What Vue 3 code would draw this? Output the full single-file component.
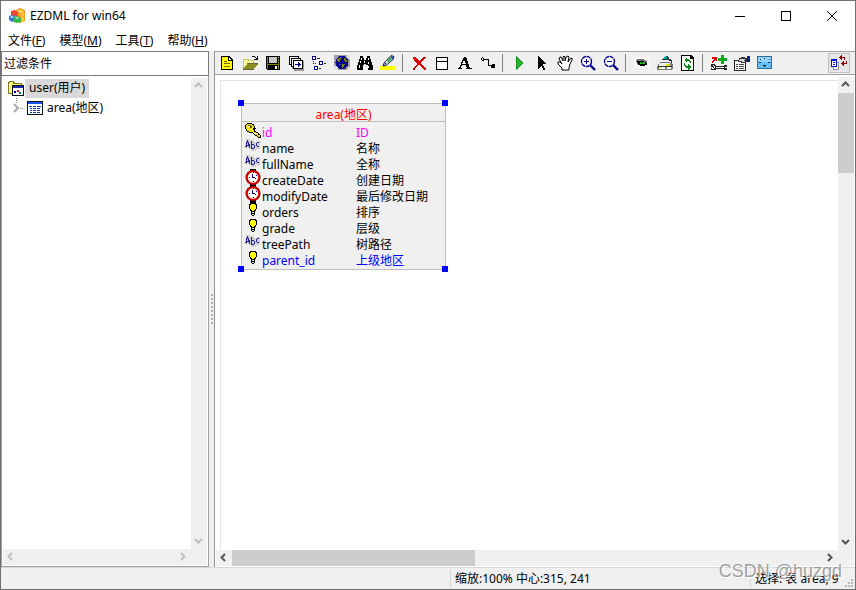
<script setup>
import { ref } from 'vue'

const filter = ref('过滤条件')
const menus = [
  { text: '文件', key: 'F' },
  { text: '模型', key: 'M' },
  { text: '工具', key: 'T' },
  { text: '帮助', key: 'H' }
]

const lens = '<g shape-rendering="auto"><circle cx="6.5" cy="6.5" r="5" fill="#fff" stroke="#00008b" stroke-width="1.4" stroke-dasharray="4 .6"/><path d="M10 10l5 5" stroke="#00008b" stroke-width="2.4"/></g>'

const groups = [
  [
    { label: '新建', art: '<path d="M2 1h8l4 4v10H2z" fill="#000"/><path d="M3 2h6v4h4v8H3z" fill="#ff0"/><path d="M10 3l2 2h-2z" fill="#fff"/><path d="M5 6h3v1H5zM5 8h6v1H5zM5 11h6v1H5z" fill="#860"/>' },
    { label: '打开', art: '<path d="M1 4h5l1 1h5v4h-1V6H6L5 5H2v8H1z" fill="#c8c860"/><path d="M2 5h3l1 1h5v3H5l-3 4z" fill="#ffffa0"/><path d="M5 9h11l-4 5H1z" fill="#8c8c20"/><path d="M1 14h11v1H1zM5 8h11v1H5z" fill="#6a6a30"/><path d="M9 2h1V1h3v1h1v1h1V1h1v4h-4V4h2V3h-1V2z" fill="#000"/>' },
    { label: '保存', art: '<path d="M1 1h14v14H2l-1-1z" fill="#000"/><path d="M2 2h1v12H2zM13 4h1v10h-1zM3 9h10v1H3z" fill="#808000"/><path d="M4 2h8v6H4z" fill="#c8c8c8"/><path d="M13 2h1v1h-1zM10 11h2v3h-2z" fill="#eee"/>' },
    { label: '复制模型', art: '<path d="M4 12h2v2h8V6h2v10H6v-2H4z" fill="#999"/><path d="M1 1h10v9H1z" fill="#000"/><path d="M2 2h8v7H2z" fill="#fff"/><path d="M3 3h10v9H3z" fill="#000"/><path d="M4 4h8v7H4z" fill="#fff"/><path d="M5 5h10v9H5z" fill="#000"/><path d="M6 6h8v7H6z" fill="#fff"/><path d="M7 9h3V7h1v1h1v1h1v1h-1v1h-1v1h-1v-2H7z" fill="#00008b"/>' },
    { label: '结构', art: '<path d="M1 1h4v4H1zM8 6h4v4H8zM3 11h4v4H3z" fill="#00008b"/><path d="M2 2h2v2H2zM9 7h2v2H9zM4 12h2v2H4z" fill="#fff"/><path d="M6 3h3v1H6zM13 8h2v1h-2zM8 13h2v1H8zM2 6h1v1H2zM2 8h1v1H2zM4 8h1v1H4z" fill="#222"/>' },
    { label: '浏览', art: '<path d="M0 0h16v15H0z" fill="#a0a0a0"/><path d="M0 11h3v1h1v3H0zM13 0h3v4h-2V3h-1zM14 12h2v3h-3v-1h1z" fill="#e4e4e4"/><circle cx="8" cy="7.500" r="6.500" fill="#00008b"/><path d="M4 3h3v2H6v2H4L3 6zM10 3h2l1 3-1 2-2-2zM8 9h3l-2 4H8z" fill="#808000"/><path d="M6 2h2v1H6zM5 9h2v1H5z" fill="#2040ff"/>' },
    { label: '查找', art: '<path d="M3 1h3v2h1v2h2V3h1V1h3v3h1v3h1v3h1v5h-5v-5H9v-1H7v1H6v5H0v-5h1V7h1V4h1z" fill="#000"/><path d="M4 3h1v2H4zM3 6h1v2H3zM2 10h1v3H2zM11 3h1v2h-1zM11 7h1v2h-1zM11 11h1v2h-1zM7 6h1v2H7z" fill="#fff"/>' },
    { label: '高亮', art: '<path d="M0 11h16v4H0z" fill="#ff0"/><g shape-rendering="auto"><path d="M4 8L11 .5l3 1-1 3-7 6-3 .5z" fill="#fff" stroke="#222"/><path d="M7 6l3-4 2 2-4 4z" fill="#3fa66c"/><path d="M11 1l3 1-1 3-2-2zM5 7l2 2-3 1z" fill="#2949a8"/></g>' }
  ],
  [
    { label: '删除', art: '<path d="M2 2h3v1h1v1h1v1h1v1h1V5h1V4h1V3h1V2h3v1h-1v1h-1v1h-1v1h-1v1h-1v2h1v1h1v1h1v1h1v1h1v2h-2v-1h-1v-1h-1v-1h-1v-1H9v-1H7v1H6v1H5v1H4v2H2v-2h1v-1h1v-1h1v-1h1V8H5V7H4V6H3V4H2z" fill="#d80000"/>' },
    { label: '新建表', art: '<path d="M2 2h12v13H2z" fill="#000"/><path d="M3 3h10v3H3zM3 7h10v7H3z" fill="#fff"/>' },
    { label: '文字', art: '<path d="M7 2h2l4 11h2v1H9v-1h1l-1-3H5l-1 3h1v1H1v-1h1zM7 5L5 9h4z" fill="#000" fill-rule="evenodd"/>' },
    { label: '连线', art: '<path d="M2 2h1v1h1v1h5v6h4v-1h2v4h-4v-2H8V5H4v1H2V5H1V3h1z" fill="#000"/><path d="M2 3h1v2H2z" fill="#fff"/><path d="M12 9h3v4h-4v-2h1z" fill="#000"/>' }
  ],
  [
    { label: '运行', art: '<g shape-rendering="auto"><path d="M5.500 1.500L12 8l-6.500 6.500z" fill="#22b52d" stroke="#15951d"/></g>' },
    { label: '选择', art: '<path d="M4 1h1v1h1v1h1v1h1v1h1v1h1v1h1v1h1v1H9v2h1v2h1v2H9v-2H8v-2H7v1H6v1H5v1H4z" fill="#000"/>' },
    { label: '移动', art: '<g shape-rendering="auto"><path d="M5 15v-2L1 9V7h2l2 2-3-5 1-2h1l2 4V2l1-1 1 1v4l1-4 2-1 1 1-1 5 2-3 2-1v2l-2 4-1 4v2z" fill="#fff" stroke="#000"/></g>' },
    { label: '放大', art: lens + '<path d="M4 6h5v1H4zM6 4h1v5H6z" fill="#00008b"/>' },
    { label: '缩小', art: lens + '<path d="M4 6h5v1H4z" fill="#00008b"/>' }
  ],
  [
    { label: '预览', art: '<path d="M0 3h16v10H0z" fill="#f7f7f7"/><path d="M3 4h7v1h2v1h1v4h-2v1H7v-1H4V9H3V7H2V5h1z" fill="#777"/><path d="M3 6h7v1h2v1h1v2h-2v1H6v-1H4V8H3z" fill="#000"/><path d="M6 7h5v2H6z" fill="#28b828"/><path d="M7 7h2v1H7z" fill="#063"/>' },
    { label: '扫描', art: '<path d="M8 1h3v1h1v2h2v1h1v3h-1V6h-2V5H5V4h2V2h1z" fill="#333"/><path d="M8 1h2v3H6z" fill="#0aa"/><path d="M3 7h10v1h2v1h1v5h-1v1H0v-4h1V9h2z" fill="#777"/><path d="M4 8h9l-1 3H2V9z" fill="#eee"/><path d="M2 12h6v2H2zM10 12h4v2h-4z" fill="#fff"/><path d="M9 9h4v2H9zM2 12h3v1H2z" fill="#ed0"/><path d="M1 11h14v1H1z" fill="#333"/>' },
    { label: '刷新', art: '<path d="M1 0h10l3 3v13H1z" fill="#000"/><path d="M2 1h8v3h3v11H2z" fill="#fff"/><path d="M7 2v2h2v1h1v1h1v2h-1V7H9V6H7v2L4 5zM4 8h1v2h1v1h2V9l3 3-3 3v-2H6v-1H5v-1H4z" fill="#078a18"/>' }
  ],
  [
    { label: '添加工具', art: '<path d="M1 2h5v4H5V5H4v1H3v1H2v1H1V6h1V5h1V4H1z" fill="#e00000"/><path d="M10 0h3v3h3v3h-3v3h-3V6H7V3h3z" fill="#08a818"/><path d="M0 9h4v1h1v1h8v-1h3v2h-2v1h2v2h-3v-1H5v1H0v-2h2v-1H0z" fill="#222"/><path d="M2 10h1v1h1v2H3v1H1v-1h2v-2H2zM5 12h8v1H5z" fill="#fff"/>' },
    { label: '属性', art: '<path d="M0 5h5v1h7v10H0z" fill="#222"/><path d="M1 6h10v9H1z" fill="#fff"/><path d="M2 9h2v1H2zM5 9h5v1H5zM2 11h2v1H2zM5 11h5v1H5zM2 13h2v1H2zM5 13h5v1H5z" fill="#444"/><path d="M3 5h2V3h2V2h4v1h2v4h-2v1H7V7H4V6H3z" fill="#333"/><path d="M6 4h5v1H6zM5 5h5v1H5zM8 6h3v1H8z" fill="#ddd"/><path d="M13 1h3v6h-3z" fill="#001f7c"/>' },
    { label: '全屏', art: '<path d="M0 1h15v13H0z" fill="#31698e"/><path d="M1 2h13v11H1z" fill="#63befa"/><path d="M1 2h13v5H1z" fill="#8ed6ff"/><path d="M2 7h2v1H2zM11 7h2v1h-2zM7 3h1v1H7zM6 10h3v1H6zM7 11h1v1H7zM3 4h1v1H3zM12 4h1v1h-1z" fill="#123"/>' }
  ]
]

const fieldArt = {
  key: '<path d="M2 0h5v1h2v2h1v2h1v1h-1v2h1v1h2v1h1v1h1v1h1v3h-3v-1h-1v-1h-2v-1H9v-1H8v-1H4V9H2V8H1V6H0V2h1V1h1z" fill="#000"/><path d="M2 1h5v1h1v1h1v2H8v2h1v2h2v1h2v2h2v2h-2v-1h-1v-1h-2v-1H9v-1H8V9H4V8H2V6H1V2h1z" fill="#f5df18"/><path d="M3 2h3v1h1v2H5V4H3z" fill="#665c00"/><path d="M3 3h2v1H3zM6 6h1v1H6zM9 10h1v1H9z" fill="#fff"/>',
  abc: '<path d="M1 0h4v2h1V1h3v2h2V2h4v8h-4v2H6v-2H5V9H0V4h1z" fill="#cfcfd4"/><path d="M2 1h1v2h1v2h1v4H4V7H2v1H0V7h1V3h1zM2 4v2h1V4zM6 2h1v3h2v1h1v3H9v1H6zM7 6v3h2V6zM12 3h2v1h-2v3h2v1h-2V7h-1V4h1z" fill="#26268f" fill-rule="evenodd"/>',
  clock: '<path d="M5 0h6v3H5zM5 15h6v3H5z" fill="#000"/><g shape-rendering="auto"><circle cx="8" cy="8.500" r="7.500" fill="#400"/><circle cx="8" cy="8.500" r="6.200" fill="#fff" stroke="#e00000" stroke-width="2"/></g><path d="M7 5h1v3h2v1H7zM10 9h1v1h-1zM8 3h1v1H8zM4 8h1v1H4zM11 6h1v1h-1zM8 12h1v1H8z" fill="#00008b"/>',
  bulb: '<path d="M5 0h6v1h1v5h-1v2h-1v4H9v1H7v-1H6V8H5V6H4V1h1z" fill="#000"/><path d="M6 1h4v1h1v4h-1v1H9v1H7V7H6V6H5V2h1z" fill="#ff0"/><path d="M7 9h2v1H7zM7 11h2v1H7z" fill="#ddd"/><path d="M6 2h1v2H6z" fill="#fff"/>'
}

const fields = [
  { name: 'id', text: 'ID', icon: 'key', tone: 'primary' },
  { name: 'name', text: '名称', icon: 'abc' },
  { name: 'fullName', text: '全称', icon: 'abc' },
  { name: 'createDate', text: '创建日期', icon: 'clock' },
  { name: 'modifyDate', text: '最后修改日期', icon: 'clock' },
  { name: 'orders', text: '排序', icon: 'bulb' },
  { name: 'grade', text: '层级', icon: 'bulb' },
  { name: 'treePath', text: '树路径', icon: 'abc' },
  { name: 'parent_id', text: '上级地区', icon: 'bulb', tone: 'foreign' }
]
</script>

<template>
  <div class="window">
    <header class="titlebar">
      <svg class="logo" viewBox="0 0 16 16">
        <path d="M7 2l4-2 5 2v11l-5 2-4-2z" fill="#f0a020" />
        <path d="M8 3l3-1 4 1-4 2z" fill="#ffe080" />
        <path d="M12 5l3-1v9l-3 1z" fill="#ffc040" />
        <path d="M2 3l4-1 3 2v4l-4 1-3-2z" fill="#e84838" />
        <path d="M0 8l3-1 3 1v5l-3 1-3-2z" fill="#3978e0" />
        <path d="M5 9l3-1 4 2v4l-4 1-3-1z" fill="#35b848" />
        <path d="M1 9l2-1 2 1-2 1zM6 10l2-1 2 1-2 1z" fill="#bde8ff" />
      </svg>
      <h1>EZDML for win64</h1>
      <div class="caption">
        <button aria-label="最小化"><svg viewBox="0 0 12 12"><path d="M1 6.500h10" /></svg></button>
        <button aria-label="最大化"><svg viewBox="0 0 12 12"><path d="M1.500 1.500h9v9h-9z" /></svg></button>
        <button aria-label="关闭"><svg class="smooth" viewBox="0 0 12 12"><path d="M1 1l10 10M11 1L1 11" /></svg></button>
      </div>
    </header>

    <nav class="menu">
      <button v-for="m in menus" :key="m.key">{{ m.text }}(<u>{{ m.key }}</u>)</button>
    </nav>

    <main class="work">
      <aside class="side">
        <input v-model="filter" type="text" aria-label="过滤条件" />
        <div class="tree-panel">
          <ul class="tree">
            <li class="root">
              <svg class="icon" viewBox="0 0 16 16" shape-rendering="crispEdges">
                <path d="M0 2h1V1h5v1h1v1h7v4H5v7H0z" fill="#807a20" />
                <path d="M1 3h1V2h3v2h8v3H4v6H1z" fill="#fff27a" />
                <path d="M4 5h12v11H4z" fill="#111" />
                <path d="M5 6h10v2H5z" fill="#1630b0" />
                <path d="M5 8h10v7H5z" fill="#fff" />
                <path d="M6 11h2v2H6z" fill="#00008b" />
                <path d="M9 10h2v2H9z" fill="#d00" />
                <path d="M11 12h2v2h-2z" fill="#088" />
              </svg>
              <span class="node selected">user(用户)</span>
            </li>
            <li class="child">
              <svg class="branch" viewBox="0 0 16 20" shape-rendering="crispEdges">
                <path d="M8.500 0v6M12 10.500h4" stroke="#888" stroke-dasharray="1 1" />
                <path d="M6 6l4 4-4 4" fill="none" stroke="#a8a8a8" stroke-width="2" shape-rendering="auto" />
              </svg>
              <svg class="icon" viewBox="0 0 16 16" shape-rendering="crispEdges">
                <path d="M0 1h16v14H0z" fill="#111" />
                <path d="M1 2h14v2H1z" fill="#1757ff" />
                <path d="M1 4h14v10H1z" fill="#fff" />
                <path d="M2 6h3v1H2zM6 6h3v1H6zM10 6h4v1h-4zM3 8h2v1H3zM6 8h3v1H6zM10 8h3v1h-3zM3 10h2v1H3zM6 10h3v1H6zM10 10h3v1h-3zM3 12h2v1H3zM6 12h3v1H6zM10 12h3v1h-3z" fill="#1240a8" />
              </svg>
              <span class="node">area(地区)</span>
            </li>
          </ul>
          <div class="bar vertical faint">
            <svg viewBox="0 0 9 9"><path d="M1 6l3.500-3.500L8 6" /></svg>
            <svg viewBox="0 0 9 9"><path d="M1 3l3.500 3.500L8 3" /></svg>
          </div>
          <div class="bar horizontal faint">
            <svg viewBox="0 0 9 9"><path d="M6 1L2.500 4.500 6 8" /></svg>
            <svg viewBox="0 0 9 9"><path d="M3 1l3.500 3.500L3 8" /></svg>
          </div>
          <div class="corner"></div>
        </div>
      </aside>

      <div class="splitter"><i v-for="n in 8" :key="n"></i></div>

      <section class="editor">
        <div class="toolbar" role="toolbar">
          <div v-for="(g, i) in groups" :key="i" class="group">
            <button v-for="b in g" :key="b.label" :aria-label="b.label">
              <svg class="icon" viewBox="0 0 16 16" shape-rendering="crispEdges" v-html="b.art"></svg>
            </button>
          </div>
          <button class="toggle" aria-label="同步">
            <svg viewBox="0 0 18 16" shape-rendering="crispEdges">
              <path d="M3 7h6v8H3z" fill="#999" />
              <path d="M4 8h4v6H4z" fill="#fff" />
              <path d="M1 4h6v8H1z" fill="#0010e0" />
              <path d="M2 6h4v5H2z" fill="#fff" />
              <path d="M3 7h2v1H3zM3 9h2v1H3z" fill="#0010e0" />
              <path d="M12 0v2h3v3h-1V3h-2v2H11V4h-1V3H9V2h1V1h1V0zM17 6v3h-3v2h-1v-1h-1V9h-1V8h1V7h1V6h1v2h2V6z" fill="#900000" />
            </svg>
          </button>
        </div>

        <div class="canvas-area">
          <div class="canvas">
            <div class="paper">
              <div class="entity">
                <table>
                  <caption>area(地区)</caption>
                  <tbody>
                    <tr v-for="f in fields" :key="f.name" :class="f.tone">
                      <td class="mark">
                        <svg :class="f.icon" :viewBox="f.icon === 'clock' ? '0 0 16 18' : '0 0 16 16'" shape-rendering="crispEdges" v-html="fieldArt[f.icon]"></svg>
                      </td>
                      <td class="field">{{ f.name }}</td>
                      <td class="note">{{ f.text }}</td>
                    </tr>
                  </tbody>
                </table>
                <i class="handle tl"></i><i class="handle tr"></i><i class="handle bl"></i><i class="handle br"></i>
              </div>
            </div>
          </div>
          <div class="bar vertical">
            <svg viewBox="0 0 9 9"><path d="M1 6l3.500-3.500L8 6" /></svg>
            <span class="thumb"></span>
            <svg viewBox="0 0 9 9"><path d="M1 3l3.500 3.500L8 3" /></svg>
          </div>
          <div class="bar horizontal">
            <svg viewBox="0 0 9 9"><path d="M6 1L2.500 4.500 6 8" /></svg>
            <span class="thumb"></span>
            <svg viewBox="0 0 9 9"><path d="M3 1l3.500 3.500L3 8" /></svg>
          </div>
          <div class="corner"></div>
        </div>
      </section>
    </main>

    <footer class="status">
      <span></span>
      <span>缩放:100% 中心:315, 241</span>
      <span>选择: 表 area, 9</span>
      <svg class="grip" viewBox="0 0 9 9" shape-rendering="crispEdges">
        <path d="M6 0h2v2H6zM3 3h2v2H3zM6 3h2v2H6zM0 6h2v2H0zM3 6h2v2H3zM6 6h2v2H6z" fill="#b8b8b8" />
      </svg>
      <div class="watermark">CSDN @huzgd</div>
    </footer>
  </div>
</template>

<style>
body {
  margin: 0;
}
</style>

<style scoped>
.window {
  box-sizing: border-box;
  height: 100vh;
  display: flex;
  flex-direction: column;
  border: 1px solid #707070;
  background: #fff;
  color: #000;
  font: 12px/16px "Noto Sans", "Noto Sans CJK SC", sans-serif;
  overflow: hidden;
}
button {
  margin: 0;
  padding: 0;
  border: 0;
  background: none;
  color: inherit;
  font: inherit;
}
svg {
  display: block;
  flex: none;
}
.icon {
  width: 16px;
  height: 16px;
}
.titlebar {
  display: flex;
  align-items: center;
  height: 30px;
  padding-left: 8px;
  flex: none;
}
.logo {
  width: 16px;
  height: 16px;
}
h1 {
  margin: 0 auto 0 5px;
  font-size: 12px;
  font-weight: 400;
}
.caption {
  display: flex;
}
.caption button {
  display: grid;
  place-items: center;
  width: 46px;
  height: 29px;
}
.caption svg {
  width: 12px;
  height: 12px;
  fill: none;
  stroke: #000;
  shape-rendering: crispEdges;
}
.caption .smooth {
  shape-rendering: auto;
}
.menu {
  display: flex;
  gap: 14px;
  height: 20px;
  padding-left: 7px;
  flex: none;
}
.menu u {
  text-underline-offset: 1px;
}
.work {
  flex: 1;
  min-height: 0;
  display: flex;
}
.side {
  width: 208px;
  flex: none;
  display: flex;
  flex-direction: column;
}
.side input {
  box-sizing: border-box;
  width: 100%;
  height: 25px;
  padding: 0 2px 2px;
  border: 1px solid #7a7a7a;
  border-radius: 0;
  background: #fff;
  color: #000;
  font: inherit;
  outline: 0;
}
.tree-panel {
  flex: 1;
  min-height: 0;
  display: grid;
  grid-template: minmax(0, 1fr) 16px / minmax(0, 1fr) 16px;
  padding: 2px 1px 1px;
  border: 1px solid #a0a0a0;
  border-top: 0;
}
.tree {
  margin: 0;
  padding: 0 0 0 5px;
  list-style: none;
}
.tree li {
  display: flex;
  align-items: center;
  height: 20px;
}
.tree .root .node {
  margin-left: 1px;
}
.branch {
  width: 16px;
  height: 20px;
  margin-right: 3px;
}
.node {
  padding: 1px 4px 2px;
}
.selected {
  background: #d9d9d9;
}
.bar {
  display: flex;
  align-items: center;
  background: #f0f0f0;
}
.bar svg {
  width: 9px;
  height: 9px;
  margin: 3px 4px 4px 3px;
  fill: none;
  stroke: #555;
  stroke-width: 2;
}
.vertical {
  flex-direction: column;
}
.vertical svg:last-child {
  margin-top: auto;
}
.horizontal svg:last-child {
  margin-left: auto;
}
.faint svg {
  stroke: #bfbfbf;
}
.thumb {
  background: #cdcdcd;
}
.vertical .thumb {
  width: 100%;
  height: 17%;
}
.horizontal .thumb {
  width: 39%;
  height: 100%;
}
.corner {
  background: #f0f0f0;
}
.splitter {
  width: 5px;
  flex: none;
  display: flex;
  flex-direction: column;
  align-items: center;
  justify-content: center;
  gap: 2px;
  background: #f0f0f0;
}
.splitter i {
  width: 2px;
  height: 2px;
  background: #b0b0b0;
}
.editor {
  flex: 1;
  min-width: 0;
  display: flex;
  flex-direction: column;
  border-left: 1px solid #909090;
}
.toolbar {
  display: flex;
  height: 22px;
  flex: none;
  border-top: 1px solid #a0a0a0;
  border-bottom: 1px solid #a0a0a0;
  background: #f0f0f0;
}
.group {
  display: flex;
}
.group + .group::before {
  content: "";
  width: 1px;
  margin: 2px 4px 2px 3px;
  background: #808080;
}
.group button {
  display: flex;
  align-items: center;
  width: 23px;
  padding-left: 4px;
}
.toggle {
  margin: 1px 5px 1px auto;
  padding: 0 1px;
  border: 1px solid #c0c0c0;
  background: #e6e6e6;
}
.toggle svg {
  width: 18px;
  height: 16px;
}
.canvas-area {
  flex: 1;
  min-height: 0;
  display: grid;
  grid-template: minmax(0, 1fr) 16px / minmax(0, 1fr) 16px;
  padding: 2px 1px 1px;
}
.canvas {
  padding: 3px 0 0 4px;
  overflow: hidden;
}
.paper {
  position: relative;
  height: 100%;
  border-top: 1px solid #e3e3e3;
  border-left: 1px solid #e3e3e3;
}
.entity {
  position: absolute;
  left: 20px;
  top: 22px;
  width: 203px;
  border: 1px solid #bdbdbd;
  background: #f0f0f0;
}
table {
  width: 100%;
  border-collapse: collapse;
  table-layout: fixed;
  margin-bottom: 1px;
}
caption {
  height: 17px;
  margin-bottom: 2px;
  border-bottom: 1px solid #bdbdbd;
  color: #f00;
  line-height: 21px;
}
tr {
  height: 16px;
}
td {
  padding: 0;
  white-space: nowrap;
}
.field,
.note {
  padding-top: 2px;
  line-height: 14px;
}
.mark {
  width: 20px;
}
.mark svg {
  width: 16px;
  height: 16px;
  margin: -1px 0 1px 3px;
}
.mark .clock {
  height: 18px;
  margin: -3px 0 1px 3px;
}
.field {
  width: 94px;
}
.primary {
  color: #f0f;
}
.foreign {
  color: #00f;
}
.handle {
  position: absolute;
  width: 6px;
  height: 6px;
  background: #00f;
}
.tl,
.tr {
  top: -4px;
}
.bl,
.br {
  bottom: -3px;
}
.tl,
.bl {
  left: -4px;
}
.tr,
.br {
  right: -3px;
}
.status {
  position: relative;
  display: grid;
  grid-template-columns: 449px 300px minmax(0, 1fr) 14px;
  height: 21px;
  flex: none;
  border-top: 1px solid #d7d7d7;
  background: #f0f0f0;
}
.status span {
  margin: 1px 0;
  padding: 2px 0 0 4px;
  overflow: hidden;
  white-space: nowrap;
}
.status span + span {
  border-left: 1px solid #d7d7d7;
}
.grip {
  width: 9px;
  height: 9px;
  align-self: end;
  justify-self: end;
  margin: 0 1px 1px 0;
}
.watermark {
  position: absolute;
  right: 13px;
  bottom: 7px;
  color: rgba(120, 120, 120, 0.7);
  font: 18px/22px "Liberation Sans", sans-serif;
  text-shadow: 1px 1px #fff;
}
</style>
